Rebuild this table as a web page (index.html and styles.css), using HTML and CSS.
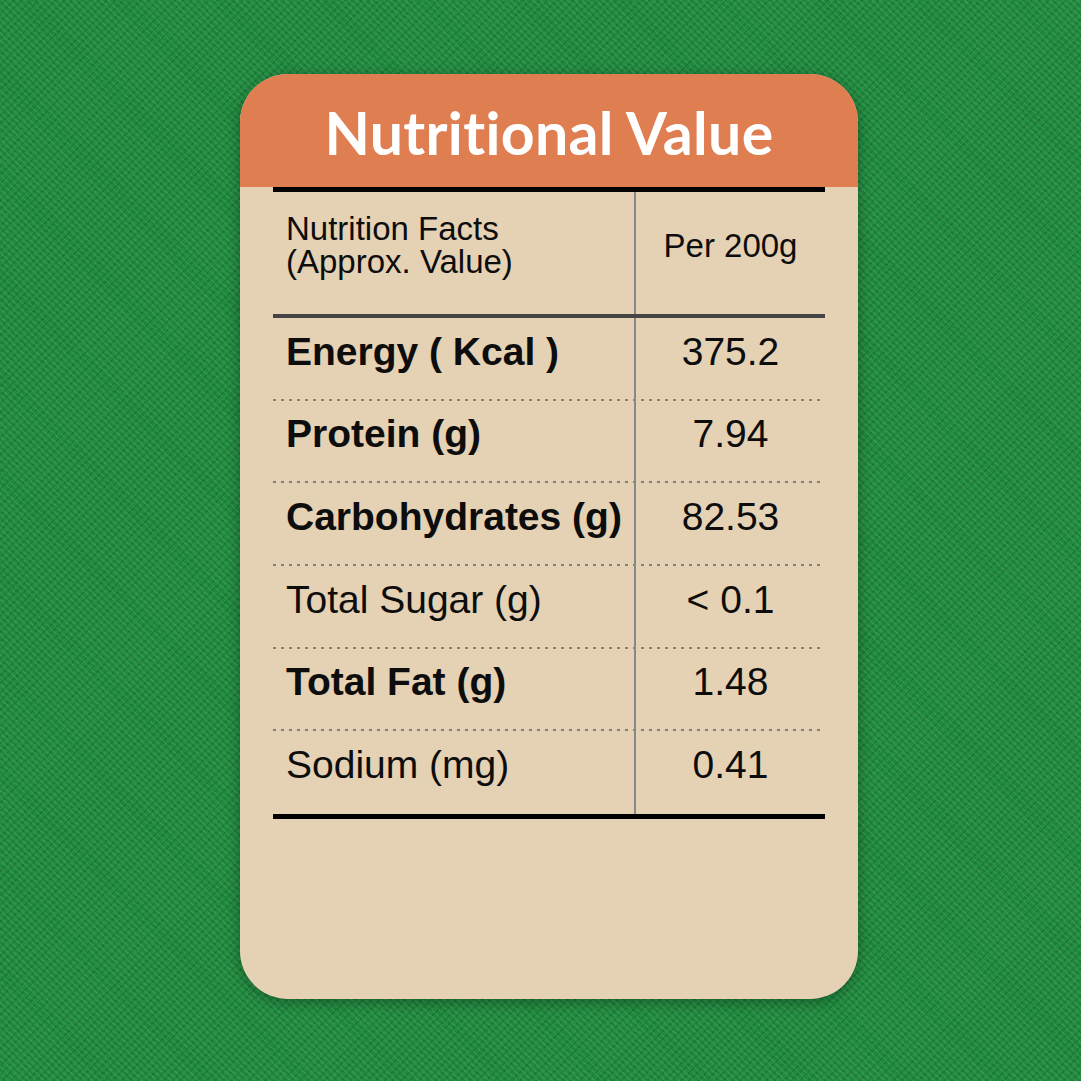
FILE: index.html
```html
<!DOCTYPE html>
<html lang="en">
<head>
<meta charset="utf-8">
<title>Nutritional Value</title>
<link rel="stylesheet" href="styles.css">
</head>
<body>
<div class="page">
  <div class="card">
    <div class="head"><h1 class="title">Nutritional Value</h1></div>
    <div class="facts">
      <div class="row row-head">
        <div class="cell name small">Nutrition Facts<br>(Approx. Value)</div>
        <div class="cell val small">Per 200g</div>
      </div>
      <div class="row">
        <div class="cell name bold">Energy ( Kcal )</div>
        <div class="cell val">375.2</div>
      </div>
      <div class="row">
        <div class="cell name bold">Protein (g)</div>
        <div class="cell val">7.94</div>
      </div>
      <div class="row">
        <div class="cell name bold">Carbohydrates (g)</div>
        <div class="cell val">82.53</div>
      </div>
      <div class="row">
        <div class="cell name">Total Sugar (g)</div>
        <div class="cell val">&lt; 0.1</div>
      </div>
      <div class="row">
        <div class="cell name bold">Total Fat (g)</div>
        <div class="cell val">1.48</div>
      </div>
      <div class="row last">
        <div class="cell name">Sodium (mg)</div>
        <div class="cell val">0.41</div>
      </div>
    </div>
  </div>
</div>
</body>
</html>
```
FILE: styles.css
```css
* { box-sizing: border-box; }
html, body {
  margin: 0;
  padding: 0;
}
body {
  width: 1081px;
  height: 1081px;
  overflow: hidden;
  background-color: #1e8b3d;
  background-image:
    repeating-linear-gradient(45deg, rgba(255,255,255,0.08) 0 2px, transparent 2px 5px),
    repeating-linear-gradient(-45deg, rgba(0,0,0,0.10) 0 2px, transparent 2px 6px),
    repeating-linear-gradient(20deg, rgba(120,220,140,0.07) 0 1px, transparent 1px 4px),
    repeating-linear-gradient(110deg, rgba(0,40,10,0.06) 0 1px, transparent 1px 3px);
  font-family: "Liberation Sans", Arial, sans-serif;
  color: #0d0d0d;
}
.page {
  padding: 74px 0 0 240px;
}
.card {
  width: 618px;
  height: 925px;
  background: #e5d1b4;
  border-radius: 48px;
  overflow: hidden;
  box-shadow: 0 3px 14px rgba(0, 0, 0, 0.35);
}
.head {
  height: 113px;
  background: #df7e50;
  display: flex;
  align-items: center;
  justify-content: center;
  padding-top: 4px;
}
.title {
  margin: 0;
  font-family: Lato, "Open Sans", sans-serif;
  font-weight: 700;
  font-size: 59px;
  line-height: 1;
  letter-spacing: 0.3px;
  font-variant-ligatures: none;
  color: #ffffff;
}
.facts {
  margin: 0 33px;
  border-top: 5px solid #000;
  border-bottom: 5px solid #000;
}
.row {
  display: flex;
  height: 82.67px;
  background-image: linear-gradient(to right, #85827c 3px, transparent 3px);
  background-size: 8px 3px;
  background-repeat: repeat-x;
  background-position: 0 calc(100% + 1px);
}
.row.last {
  background-image: none;
}
.row-head {
  height: 126px;
  border-bottom: 4px solid #444;
  background-image: none;
}
.cell {
  display: flex;
  align-items: center;
  padding-bottom: 16px;
  font-size: 39px;
  line-height: 1;
}
.name {
  width: 361px;
  padding-left: 13px;
}
.val {
  flex: 1;
  justify-content: center;
  border-left: 2px solid #888;
}
.bold {
  font-weight: 700;
}
.small {
  font-size: 33px;
  line-height: 33px;
}
```
